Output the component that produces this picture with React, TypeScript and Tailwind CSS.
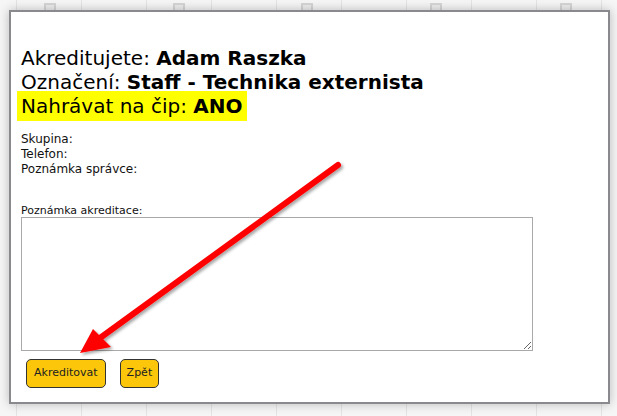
import React from 'react';

const squares = [44, 173, 301, 430, 560];

const App = () => {
  return (
    <main
      className="relative w-[617px] h-[416px] overflow-hidden bg-[#f6f6f6] bg-[linear-gradient(to_right,#e4e4e4_1px,transparent_1px)] bg-[length:65px_100%] bg-[position:16px_0]"
      style={{ fontFamily: '"DejaVu Sans", Verdana, sans-serif' }}
    >
      {/* Calendar header squares behind the dialog */}
      {squares.map((x) => (
        <div
          key={x}
          className="absolute top-[3px] w-[12px] h-[12px] border-2 border-[#d6d6d6] bg-[#eeeeee]"
          style={{ left: x }}
        />
      ))}

      {/* Dialog */}
      <div className="absolute left-[9px] top-[10px] w-[601px] h-[394px] bg-white border-2 border-[#8a8a8e] shadow-[0_0_10px_rgba(0,0,0,0.25)] px-[10px] pt-[34px] text-black">
        <div className="text-[20px] leading-[24px]">
          <div>
            Akreditujete: <b>Adam Raszka</b>
          </div>
          <div>
            Označení: <b>Staff - Technika externista</b>
          </div>
          <div>
            <span className="bg-[#ffff00] px-[4px] py-[3px] -ml-[4px]">
              Nahrávat na čip: <b>ANO</b>
            </span>
          </div>
        </div>

        <div className="mt-[14px] text-[12px] leading-[15px] text-[#111]">
          <div>Skupina:</div>
          <div>Telefon:</div>
          <div>Poznámka správce:</div>
        </div>

        <div className="mt-[27px] text-[11px] leading-[13px] text-[#111]">Poznámka akreditace:</div>
        <textarea className="block w-[512px] h-[134px] border border-[#a9a9a9] bg-white outline-none resize" />

        <div className="flex gap-[14px] mt-[8px] ml-[5px]">
          <button className="h-[29px] px-[7px] rounded-[5px] border border-[#333] bg-[#fcc70b] text-[11px] text-[#222]">
            Akreditovat
          </button>
          <button className="h-[29px] px-[6px] rounded-[5px] border border-[#333] bg-[#fcc70b] text-[11px] text-[#222]">
            Zpět
          </button>
        </div>
      </div>

      {/* Red annotation arrow */}
      <svg className="absolute inset-0 pointer-events-none" width="617" height="416" viewBox="0 0 617 416">
        <defs>
          <filter id="arrowShadow" x="-20%" y="-20%" width="140%" height="140%">
            <feDropShadow dx="2" dy="2" stdDeviation="1.5" floodColor="#000" floodOpacity="0.35" />
          </filter>
        </defs>
        <g filter="url(#arrowShadow)">
          <line x1="338" y1="165" x2="100" y2="338" stroke="#ff0000" strokeWidth="6" strokeLinecap="round" />
          <polygon points="80,353 93,329 111,347" fill="#ff0000" />
        </g>
      </svg>
    </main>
  );
};

export default App;
